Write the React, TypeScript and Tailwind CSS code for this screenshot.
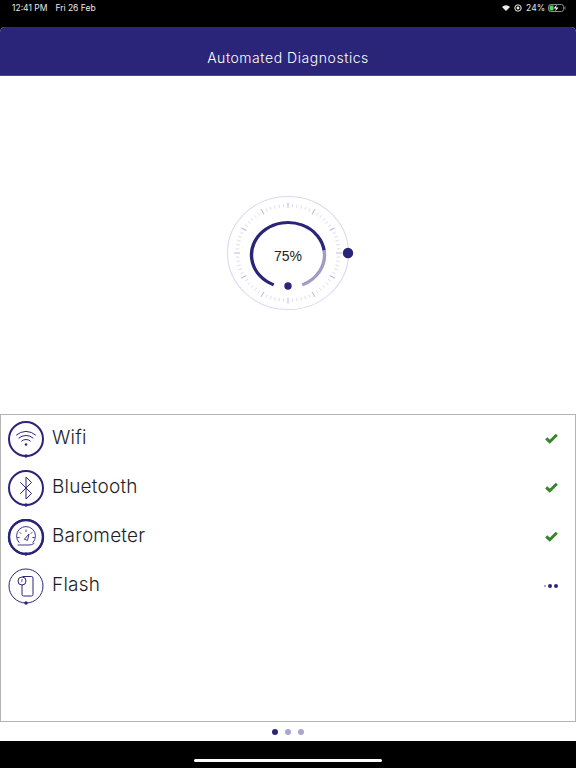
import React from "react";

const NAVY = "#2b2579";

function Gauge() {
  const ticks = Array.from({ length: 72 }, (_, i) => i * 5);
  const pol = (r: number, deg: number) => {
    const a = ((deg - 90) * Math.PI) / 180;
    return [r * Math.cos(a), r * Math.sin(a)];
  };
  const arc = (r: number, a: number, b: number) => {
    const [x1, y1] = pol(r, a);
    const [x2, y2] = pol(r, b);
    return `M${x1} ${y1}A${r} ${r} 0 ${b - a > 180 ? 1 : 0} 1 ${x2} ${y2}`;
  };
  return (
    <div className="relative w-[140px] h-[130px]">
      <svg width="140" height="130" viewBox="-70 -65 140 130" className="block">
        <g transform="scale(1 0.935)">
          <circle r="60.5" fill="none" stroke="#d9d8f3" strokeWidth="1.1" />
          {ticks.map((d) => {
            const major = d % 30 === 0;
            const [x1, y1] = pol(major ? 48 : 49, d);
            const [x2, y2] = pol(major ? 54 : 52.5, d);
            return (
              <line
                key={d}
                x1={x1}
                y1={y1}
                x2={x2}
                y2={y2}
                stroke={major ? "#bdbaec" : "#d8d7e2"}
                strokeWidth={major ? 1.1 : 0.9}
              />
            );
          })}
        </g>
        <g transform="translate(0 2) scale(1 0.89)">
          <path d={arc(36.5, 203, 442)} fill="none" stroke={NAVY} strokeWidth="3.4" />
          <path d={arc(36.5, 442, 517)} fill="none" stroke="#a09cc4" strokeWidth="3.4" />
        </g>
        <circle cx="0" cy="33" r="3.7" fill={NAVY} />
        <circle cx="60" cy="0" r="5.2" fill={NAVY} />
      </svg>
      <div className="absolute left-0 right-0 top-[59px] text-center text-[14px] leading-[18px] text-[#222] font-['Liberation_Sans',sans-serif]">
        75%
      </div>
    </div>
  );
}

function Ring({ thin, children }: { thin?: boolean; children: React.ReactNode }) {
  return (
    <svg width="38" height="38" viewBox="0 0 38 38" className="block shrink-0">
      <circle cx="19" cy="18" r="17" fill="none" stroke={NAVY} strokeWidth={thin ? 1 : 2} />
      <circle cx="19" cy="35" r="1.7" fill={NAVY} />
      {children}
    </svg>
  );
}

const WifiI = () => (
  <Ring>
    <g fill="none" stroke={NAVY} strokeWidth="1" strokeLinecap="round">
      <path d="M9.5 14a14 14 0 0 1 19 0" />
      <path d="M12 17a10.5 10.5 0 0 1 14 0" />
      <path d="M14.7 20a6.5 6.5 0 0 1 8.6 0" />
    </g>
    <circle cx="19" cy="23.5" r="1.2" fill={NAVY} />
  </Ring>
);

const BtI = () => (
  <Ring>
    <path
      d="M13.5 12.5l11 11-5.5 5.5V7l5.5 5.5-11 11"
      fill="none"
      stroke={NAVY}
      strokeWidth="1"
      strokeLinejoin="round"
      strokeLinecap="round"
    />
  </Ring>
);

const BaroI = () => (
  <Ring>
    <circle cx="19" cy="18" r="17" fill="none" stroke={NAVY} strokeWidth="2.4" />
    <g fill="none" stroke={NAVY} strokeWidth="0.9" strokeLinecap="round">
      <path d="M12 23.5a9.5 9.5 0 1 1 14 0" />
      <path d="M11 26h11a8 8 0 0 0 5-1.5" />
      <path d="M19 11v1.5M13 13.5l1 1M25 13.5l-1 1M10.8 18.5h1.4M27.2 18.5h-1.4" />
      <path d="M17.6 20l4.4-5-1.4 6z" />
    </g>
  </Ring>
);

const FlashI = () => (
  <Ring thin>
    <g fill="none" stroke={NAVY} strokeWidth="1" strokeLinecap="round">
      <rect x="15" y="8.5" width="11" height="19.5" rx="1.5" />
    </g>
    <circle cx="15" cy="13" r="4" fill="#fff" stroke={NAVY} strokeWidth="1" />
    <path d="M15 11v2.2l-1 1" fill="none" stroke={NAVY} strokeWidth="0.8" />
  </Ring>
);

const Check = () => (
  <svg width="13" height="11" viewBox="0 0 13 11" className="block -mt-[2px]">
    <path d="M1.2 5.3l3.6 3.4L11.8 1.8" fill="none" stroke="#39842b" strokeWidth="3" />
  </svg>
);

const Pending = () => (
  <div className="flex items-center gap-[2px] -mt-[2px]">
    <div className="w-[2px] h-[2px] rounded-full bg-[#8f8bc0]" />
    <div className="w-1 h-1 rounded-full bg-[#2b2579]" />
    <div className="w-1 h-1 rounded-full bg-[#2b2579]" />
  </div>
);

const rows = [
  { label: "Wifi", icon: <WifiI />, status: <Check /> },
  { label: "Bluetooth", icon: <BtI />, status: <Check /> },
  { label: "Barometer", icon: <BaroI />, status: <Check /> },
  { label: "Flash", icon: <FlashI />, status: <Pending /> },
];

export default function App() {
  return (
    <div className="w-[576px] h-[768px] bg-black flex flex-col overflow-hidden font-['Inter','Liberation_Sans',sans-serif]">
      <div className="h-[27px] shrink-0 flex justify-between pl-3 pr-[10px] pt-[2px] text-[8.5px] leading-[12px] text-[#e8e8e8]">
        <div className="flex gap-2">
          <span>12:41 PM</span>
          <span>Fri 26 Feb</span>
        </div>
        <div className="flex items-center h-[12px] gap-[3px]">
          <svg width="8" height="6" viewBox="0 0 8 6">
            <path d="M0 2a5.6 5.6 0 0 1 8 0L4 6z" fill="#eee" />
          </svg>
          <svg width="8" height="8" viewBox="0 0 8 8" className="ml-[1px]">
            <circle cx="4" cy="4" r="3.2" fill="none" stroke="#eee" strokeWidth="1" />
            <circle cx="4" cy="4" r="1.4" fill="#eee" />
          </svg>
          <span className="ml-[1px]">24%</span>
          <svg width="18" height="8" viewBox="0 0 18 8">
            <rect x="0.5" y="0.5" width="15" height="7" rx="2" fill="none" stroke="#888" />
            <rect x="1.5" y="1.5" width="4" height="5" fill="#4cd964" />
            <rect x="16.5" y="2.5" width="1" height="3" fill="#888" />
            <path d="M9 0.5L5.5 4.5h2.5L7 7.5l3.5-4H8z" fill="#fff" />
          </svg>
        </div>
      </div>

      <div className="flex-1 flex flex-col bg-white rounded-t-[5px] overflow-hidden">
        <div className="h-[49px] shrink-0 bg-[#2b2579] border-b border-[#4a44a0] flex items-center justify-center pt-[13px] text-white text-[14px] font-light tracking-[0.55px]">
          Automated Diagnostics
        </div>
        <div className="h-[338px] shrink-0 flex justify-center pt-[112px]">
          <Gauge />
        </div>
        <div className="h-[308px] shrink-0 border border-[#b4b4b4] flex flex-col">
          {rows.map((r) => (
            <div key={r.label} className="h-[49px] flex items-center pl-[6px] pr-[17px]">
              {r.icon}
              <span className="ml-[7px] flex-1 text-[#1e1e26] text-[19px] font-light tracking-[0.2px] -mt-[2px]">{r.label}</span>
              {r.status}
            </div>
          ))}
        </div>
        <div className="flex-1 flex items-center justify-center gap-[7px]">
          <div className="w-[6px] h-[6px] rounded-full bg-[#2b2579]" />
          <div className="w-[6px] h-[6px] rounded-full bg-[#a9a6cf]" />
          <div className="w-[6px] h-[6px] rounded-full bg-[#a9a6cf]" />
        </div>
      </div>

      <div className="h-[27px] shrink-0 flex justify-center pt-[18px]">
        <div className="w-[188px] h-[3px] rounded-full bg-white" />
      </div>
    </div>
  );
}
